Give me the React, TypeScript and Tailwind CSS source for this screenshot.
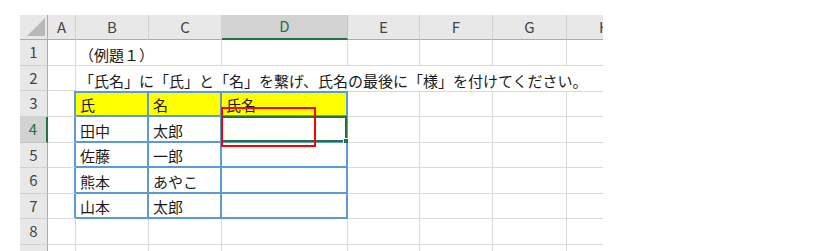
const font = "font-['Noto_Sans_CJK_JP','Noto_Sans',sans-serif]";

const colHead =
  "flex items-center justify-center bg-[#e8e8e8] text-[#444] border-r border-b border-r-[#d0d0d0] border-b-[#ababab]";
const rowHead =
  "flex items-center justify-center bg-[#e8e8e8] text-[#444] border-r border-b border-r-[#ababab] border-b-[#d0d0d0]";
const cell = "flex items-end pl-[3px] pb-[3px] leading-none border-r border-b border-[#dadada]";
const blueLeft = "border-r-2 border-r-[#5b9bd5]";
const tcell =
  "flex items-end pl-[4px] pb-[3px] leading-none whitespace-nowrap border-r-2 border-b-2 border-[#5b9bd5]";
const topGray = "border-t border-t-[#dadada]";

const rows = [
  ["田中", "太郎"],
  ["佐藤", "一郎"],
  ["熊本", "あやこ"],
  ["山本", "太郎"],
];

function RowHead({ n, selected }: { n: number; selected?: boolean }) {
  return (
    <div
      className={
        selected
          ? "flex items-center justify-center bg-[#d2d2d2] text-[#217346] border-r-2 border-b border-r-[#217346] border-b-[#c4c4c4]"
          : rowHead
      }
    >
      {n}
    </div>
  );
}

function Blanks({ count, extra = "" }: { count: number; extra?: string }) {
  return (
    <>
      {Array.from({ length: count }).map((_, i) => (
        <div key={i} className={`${cell} ${extra}`} />
      ))}
    </>
  );
}

export default function App() {
  return (
    <div className={`h-[251px] w-[837px] overflow-hidden bg-white pl-[20px] pt-[15px] text-[15px] ${font}`}>
      <div className="relative w-[583px] overflow-hidden">
        <div className="grid grid-cols-[28px_28px_73px_73px_126px_72px_73px_74px_73px] grid-rows-[25px_26px_25px_26px_26px_25px_26px_25px_26px_26px] text-[#1a1a1a]">
          {/* header row */}
          <div className="flex items-end justify-end border-r border-b border-r-[#ababab] border-b-[#ababab] bg-[#e8e8e8] pb-[3px] pr-[2px]">
            <svg width="18" height="18" viewBox="0 0 18 18">
              <polygon points="18,0 18,18 0,18" fill="#b8b8b8" />
            </svg>
          </div>
          <div className={colHead}>A</div>
          <div className={colHead}>B</div>
          <div className={colHead}>C</div>
          <div className="flex items-center justify-center border-r border-b-2 border-r-[#c4c4c4] border-b-[#217346] bg-[#d2d2d2] text-[#217346]">
            D
          </div>
          <div className={colHead}>E</div>
          <div className={colHead}>F</div>
          <div className={colHead}>G</div>
          <div className={`${colHead} justify-start pl-[32px]`}>H</div>

          {/* row 1 */}
          <RowHead n={1} />
          <div className={cell} />
          <div className={`${cell} col-span-2 whitespace-nowrap`}>（例題１）</div>
          <Blanks count={5} />

          {/* row 2 */}
          <RowHead n={2} />
          <div className={cell} />
          <div className="col-span-7 flex items-end whitespace-nowrap pb-[3px] pl-[3px] leading-none">
            「氏名」に「氏」と「名」を繋げ、氏名の最後に「様」を付けてください。
          </div>

          {/* row 3 */}
          <RowHead n={3} />
          <div className={`${cell} ${blueLeft}`} />
          <div className={`${tcell} border-t-2 bg-[#ffff00]`}>氏</div>
          <div className={`${tcell} border-t-2 bg-[#ffff00]`}>名</div>
          <div className={`${tcell} border-t-2 bg-[#ffff00]`}>氏名</div>
          <Blanks count={4} extra={topGray} />

          {/* rows 4-7 */}
          {rows.map(([last, first], i) => (
            <div key={i} className="contents">
              <RowHead n={i + 4} selected={i === 0} />
              <div className={`${cell} ${blueLeft}`} />
              <div className={tcell}>{last}</div>
              <div className={tcell}>{first}</div>
              <div className={`${tcell} relative`}>
                {i === 0 && (
                  <div className="absolute -top-[1px] -left-[1px] -right-[1px] -bottom-[1px] border-2 border-[#217346]">
                    <div className="absolute -right-[4px] -bottom-[4px] h-[6px] w-[6px] border border-white bg-[#217346]" />
                  </div>
                )}
              </div>
              <Blanks count={4} />
            </div>
          ))}

          {/* row 8 */}
          <RowHead n={8} />
          <Blanks count={8} />

          {/* row 9 */}
          <RowHead n={9} />
          <Blanks count={8} />
        </div>

        {/* red annotation box */}
        <div className="absolute left-[201px] top-[92px] h-[40px] w-[95px] border-2 border-[#ff0000]" />
      </div>
    </div>
  );
}
